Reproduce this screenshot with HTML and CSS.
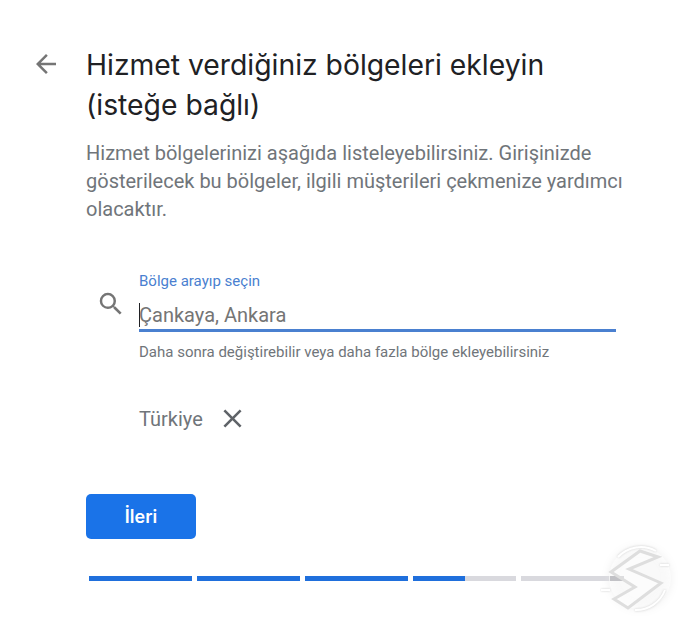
FILE: index.html
```html
<!DOCTYPE html>
<html lang="tr">
<head>
<meta charset="utf-8">
<title>Hizmet bölgeleri</title>
<link rel="stylesheet" href="styles.css">
</head>
<body>
<main class="page">
  <button class="back" aria-label="Geri">
    <svg width="30" height="30" viewBox="0 0 24 24"><path fill="#757575" d="M20 11H7.83l5.59-5.59L12 4l-8 8 8 8 1.41-1.41L7.83 13H20v-2z"/></svg>
  </button>
  <div class="content">
    <h1 class="title">Hizmet verdiğiniz bölgeleri ekleyin (isteğe bağlı)</h1>
    <p class="desc">Hizmet bölgelerinizi aşağıda listeleyebilirsiniz. Girişinizde gösterilecek bu bölgeler, ilgili müşterileri çekmenize yardımcı olacaktır.</p>
    <div class="search">
      <svg class="search-icon" width="30" height="30" viewBox="0 0 24 24"><path fill="#757575" d="M15.5 14h-.79l-.28-.27A6.47 6.47 0 0 0 16 9.5 6.5 6.5 0 1 0 9.5 16c1.61 0 3.09-.59 4.23-1.57l.27.28v.79l5 4.99L20.49 19l-4.99-5zm-6 0C7.01 14 5 11.99 5 9.5S7.01 5 9.5 5 14 7.01 14 9.5 11.99 14 9.5 14z"/></svg>
      <div class="field">
        <label class="label">Bölge arayıp seçin</label>
        <div class="input"><span class="caret"></span>Çankaya, Ankara</div>
        <div class="hint">Daha sonra değiştirebilir veya daha fazla bölge ekleyebilirsiniz</div>
      </div>
    </div>
    <div class="chip">
      <span>Türkiye</span>
      <svg width="31" height="31" viewBox="0 0 24 24"><path fill="#5f6368" d="M19 6.41 17.59 5 12 10.59 6.41 5 5 6.41 10.59 12 5 17.59 6.41 19 12 13.41 17.59 19 19 17.59 13.41 12z"/></svg>
    </div>
    <button class="next">İleri</button>
    <div class="progress">
      <div class="seg"><i class="fill full"></i></div>
      <div class="seg"><i class="fill full"></i></div>
      <div class="seg"><i class="fill full"></i></div>
      <div class="seg"><i class="fill half"></i></div>
      <div class="seg"></div>
    </div>
  </div>
</main>
<svg class="mark" width="88" height="90" viewBox="600 535 88 90">
  <circle class="mark-disc" cx="640" cy="578" r="31"/>
  <rect class="mark-bar" x="610" y="576" width="14" height="5"/>
  <path class="mark-ring" d="M618 557a31 31 0 0 1 38-6M665 590a31 31 0 0 1-30 20"/>
  <path class="mark-tab" d="M660 565h9M601 590h9"/>
  <path class="mark-s" d="M640 551 658 557 629 569 661 583 628 608 614 599 635 587 611 572z"/>
</svg>
</body>
</html>
```
FILE: styles.css
```css
html, body { margin: 0; padding: 0; background: #fff; }
body { width: 688px; height: 630px; overflow: hidden; position: relative; font-family: Roboto, sans-serif; }
.page { display: flex; padding: 45px 0 0 31px; }
.back { width: 30px; height: 30px; padding: 0; border: 0; background: none; margin: 4px 25px 0 0; }
.back svg { display: block; }
.content { width: 540px; }
.title { margin: 0; font: 400 28.3px/40px Inter, sans-serif; color: #202124; width: 500px; }
.desc { margin: 14px 0 0; font-size: 20px; line-height: 28px; color: #70757a; }
.search { display: flex; margin-top: 48px; }
.search-icon { margin: 18px 13px 0 10px; }
.field { width: 477px; }
.label { display: block; font-size: 15px; line-height: 20px; color: #4a7fd0; }
.input { margin-top: 10px; height: 28px; line-height: 28px; font-size: 20px; color: #757575; border-bottom: 3px solid #4a80d0; position: relative; }
.caret { position: absolute; left: 0; top: 2px; width: 1px; height: 24px; background: #202124; }
.hint { margin-top: 11px; font-size: 15px; line-height: 18px; color: #70757a; }
.chip { display: flex; align-items: center; gap: 14px; margin: 42px 0 0 53px; font-size: 20px; color: #70757a; }
.next { display: block; margin-top: 60px; width: 110px; height: 45px; border: 0; border-radius: 5px; background: #1a73e8; color: #fff; font: 600 18px Inter, sans-serif; }
.progress { display: flex; gap: 5px; margin: 37px 0 0 3px; }
.seg { width: 103px; height: 5px; background: #d9d9de; }
.fill { display: block; height: 100%; background: #1f6fdc; }
.full { width: 100%; }
.half { width: 50%; }
.mark { position: absolute; left: 600px; top: 535px; }
.mark-disc { fill: #fff; fill-opacity: .6; filter: drop-shadow(0 0 4px #e4e4e4); }
.mark-bar { fill: #c2c2c6; }
.mark-ring, .mark-tab { fill: none; stroke: #fff; stroke-width: 2; filter: drop-shadow(0 0 1px #cfcfcf); }
.mark-s { fill: #fff; fill-opacity: .45; stroke: #dedede; stroke-width: 3; }
```
